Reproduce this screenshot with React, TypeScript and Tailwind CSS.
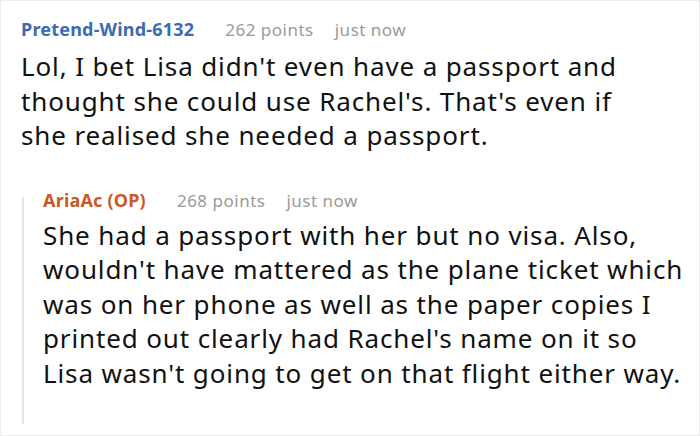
type CommentProps = {
  author: string;
  authorClass: string;
  points: string;
  time: string;
  body: string;
  bodyClass?: string;
};

const Comment = ({ author, authorClass, points, time, body, bodyClass = "" }: CommentProps) => (
  <div>
    <div className="flex items-baseline h-[26px] leading-[26px]">
      <span className={`text-[18px] font-bold tracking-[0.2px] ${authorClass}`}>{author}</span>
      <span className="ml-[31px] text-[17px] tracking-[0.5px] text-[#9a9a9a]">{points}</span>
      <span className="ml-[21px] text-[17px] tracking-[0.5px] text-[#9a9a9a]">{time}</span>
    </div>
    <p className={`text-[26px] leading-[34.5px] tracking-[0.87px] text-[#111111] ${bodyClass}`}>{body}</p>
  </div>
);

const App = () => {
  return (
    <div className="w-[700px] h-[436px] bg-white border border-[#ededed] overflow-hidden font-['Noto_Sans',sans-serif]">
      <div className="pl-[20px] pt-[15px]">
        <div className="w-[630px]">
          <Comment
            author="Pretend-Wind-6132"
            authorClass="text-[#3b6bb0]"
            points="262 points"
            time="just now"
            bodyClass="mt-[7px]"
            body="Lol, I bet Lisa didn't even have a passport and thought she could use Rachel's. That's even if she realised she needed a passport."
          />
        </div>
        <div className="mt-[34px] flex">
          {/* thread line */}
          <div className="ml-[1px] mt-[10px] w-[2px] bg-[#e4e4e4] shrink-0" />
          <div className="pl-[19px] pb-[34px] w-[660px] shrink-0">
            <Comment
              author="AriaAc (OP)"
              authorClass="text-[#c95a26]"
              points="268 points"
              time="just now"
              bodyClass="mt-[5px]"
              body="She had a passport with her but no visa. Also, wouldn't have mattered as the plane ticket which was on her phone as well as the paper copies I printed out clearly had Rachel's name on it so Lisa wasn't going to get on that flight either way."
            />
          </div>
        </div>
      </div>
    </div>
  );
};

export default App;
